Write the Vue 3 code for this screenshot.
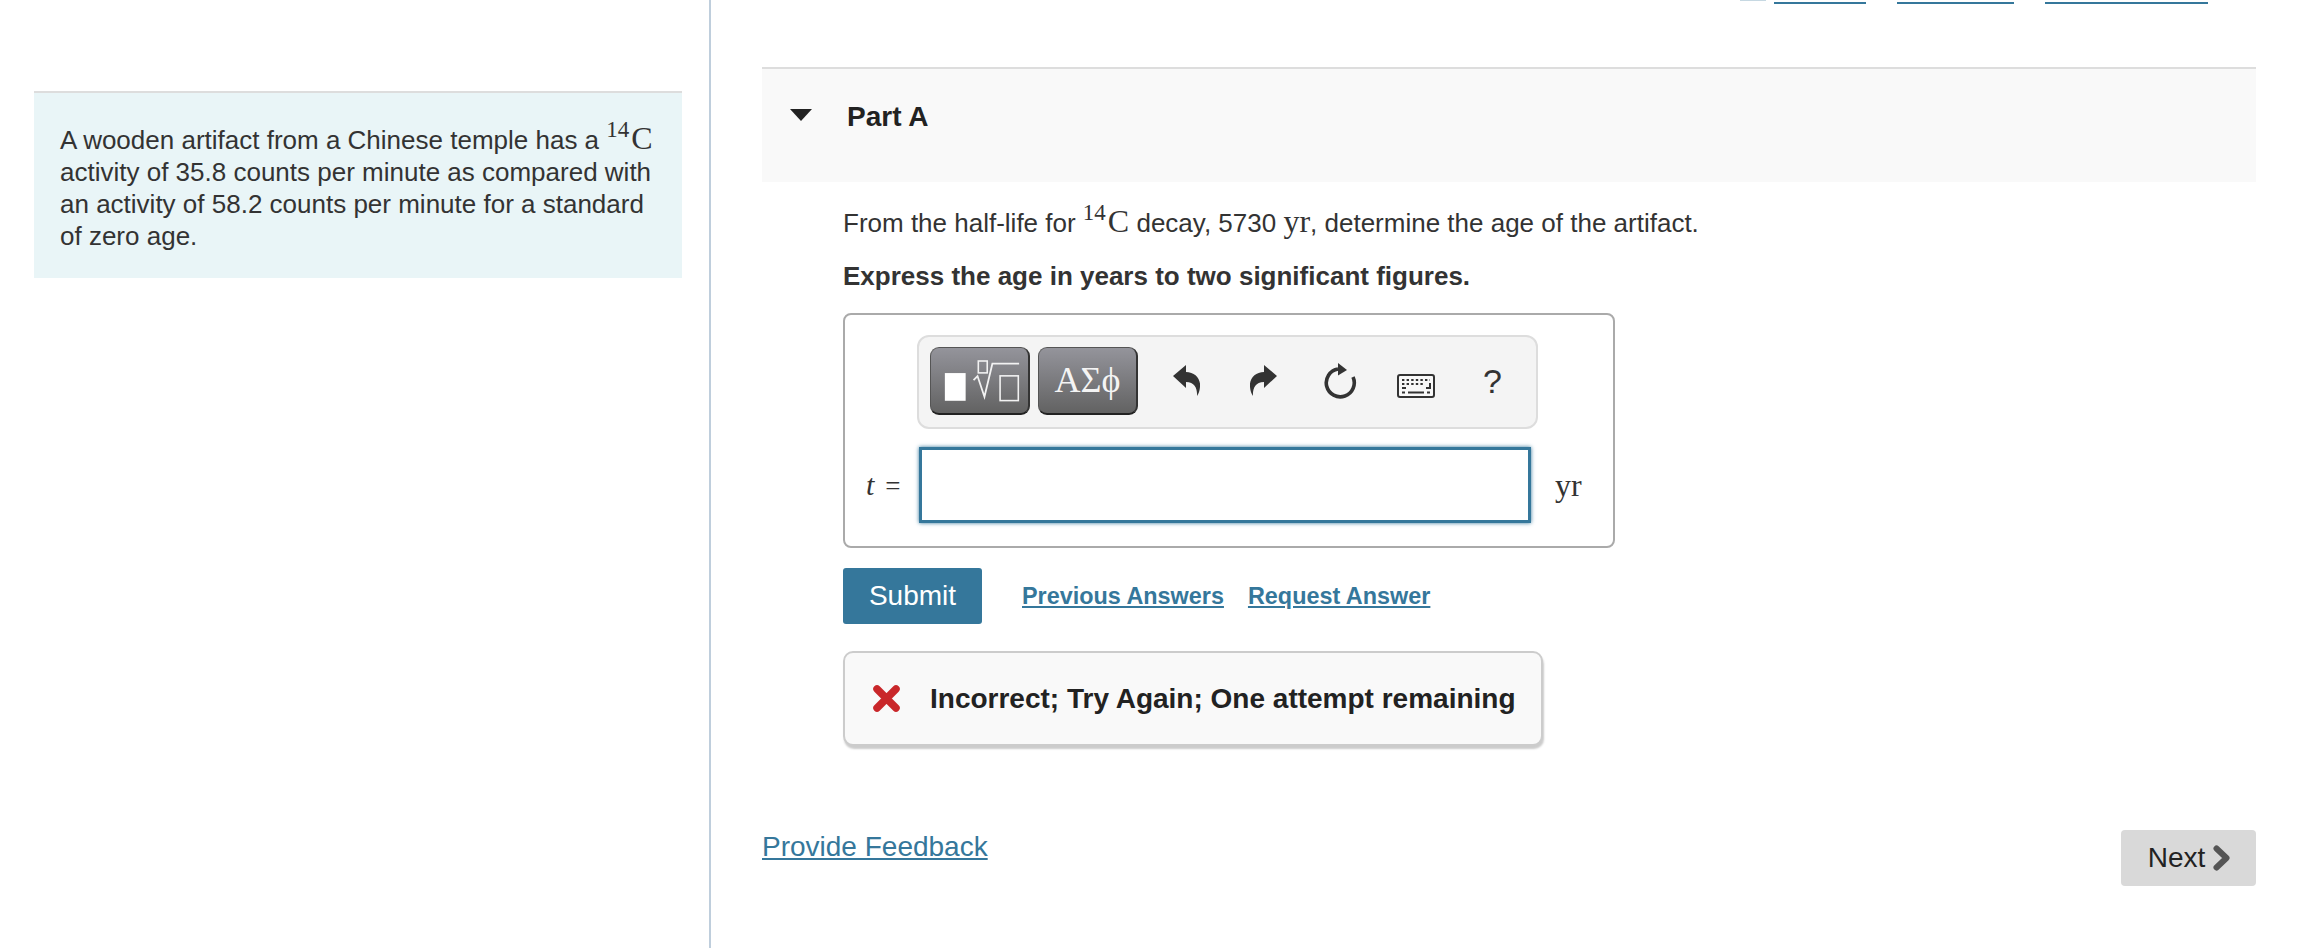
<script setup>
const topLinks = ['Review', 'Constants', 'Periodic Table']
</script>

<template>
  <div class="page">
    <aside class="left">
      <div class="intro">
        A wooden artifact from a Chinese temple has a <span class="math"><sup>14</sup>C</span>
        activity of 35.8 counts per minute as compared with an activity of 58.2 counts per minute for a standard of zero age.
      </div>
    </aside>

    <main class="right">
      <nav class="top-links">
        <span class="top-icon"></span>
        <a v-for="l in topLinks" :key="l" class="top-link">{{ l }}</a>
      </nav>

      <section class="part-head">
        <span class="caret"></span>
        <h2>Part A</h2>
      </section>

      <section class="part-body">
        <p class="question">
          From the half-life for <span class="math"><sup>14</sup>C</span> decay, 5730 <span class="math">yr</span>, determine the age of the artifact.
        </p>
        <p class="instruction">Express the age in years to two significant figures.</p>

        <div class="answer">
          <div class="toolbar">
            <button class="tool-btn">
              <svg width="98" height="65" viewBox="1 1 98 65">
                <rect x="15" y="26" width="21" height="28" fill="#fff" />
                <rect x="48.8" y="13.8" width="9" height="12" fill="none" stroke="#f2f2f2" stroke-width="1.6" />
                <path d="M44 33 L48 29 L55 50 L63 16.5 H90" fill="none" stroke="#f2f2f2" stroke-width="1.8" />
                <rect x="70.8" y="28.8" width="18.4" height="25" fill="none" stroke="#f2f2f2" stroke-width="1.6" />
              </svg>
            </button>
            <button class="tool-btn greek">ΑΣϕ</button>
            <span class="icons">
              <svg class="ic undo" width="27" height="31" viewBox="0 0 27 31"><path d="M0 11 L13 0 V7 C22 7 28 14 27 22 C26.7 26 25.5 29 24 31 C24.5 24 22 17 13 17 V23 Z" fill="#333" /></svg>
              <svg class="ic redo" width="27" height="31" viewBox="0 0 27 31"><path d="M27 11 L14 0 V7 C5 7 -1 14 0 22 C0.3 26 1.5 29 3 31 C2.5 24 5 17 14 17 V23 Z" fill="#333" /></svg>
              <svg class="ic reload" width="34" height="38" viewBox="0 0 34 38">
                <path d="M15 6 A14 14 0 1 0 30 14" fill="none" stroke="#333" stroke-width="3.6" />
                <path d="M15 0 L24 7 L15 12.5 Z" fill="#333" />
              </svg>
              <svg class="ic kbd" width="38" height="24" viewBox="0 0 38 24">
                <rect x="1" y="1" width="36" height="22" rx="2" fill="#f8f8f8" stroke="#333" stroke-width="2" />
                <path d="M5 6 H33 M5 10 H28" stroke="#333" stroke-width="2.2" stroke-dasharray="2.4 2.2" />
                <path d="M5 14 H9 M29 14 H33 V9 M5 18.5 H8 M11 18.5 H27 M30 18.5 H33" stroke="#333" stroke-width="2" fill="none" />
              </svg>
              <span class="help">?</span>
            </span>
          </div>

          <div class="answer-row">
            <span class="label"><i>t</i><span class="eq">=</span></span>
            <input class="input" type="text" />
            <span class="unit">yr</span>
          </div>
        </div>

        <div class="actions">
          <button class="submit">Submit</button>
          <a class="act-link first">Previous Answers</a>
          <a class="act-link">Request Answer</a>
        </div>

        <div class="feedback">
          <svg width="27" height="27" viewBox="0 0 27 27">
            <path d="M4 4 L23 23 M23 4 L4 23" stroke="#c9272a" stroke-width="7.5" stroke-linecap="round" />
          </svg>
          <span>Incorrect; Try Again; One attempt remaining</span>
        </div>
      </section>

      <footer class="footer">
        <a class="provide">Provide Feedback</a>
        <button class="next">
          Next
          <svg width="18" height="26" viewBox="0 0 18 26"><path d="M3.5 3.5 L13.5 13 L3.5 22.5" fill="none" stroke="#555" stroke-width="6" stroke-linecap="round" stroke-linejoin="round" /></svg>
        </button>
      </footer>
    </main>
  </div>
</template>

<style>
html, body { background: #fff; }
</style>

<style scoped>
.page {
  display: flex;
  height: 948px;
  overflow: hidden;
  font-family: "Liberation Sans", Arial, sans-serif;
  font-size: 26px;
  color: #333;
}
.left {
  box-sizing: border-box;
  width: 711px;
  flex: none;
  padding: 91px 27px 0 34px;
  border-right: 2px solid #bfcedc;
}
.intro {
  background: #e9f5f7;
  border-top: 2px solid #ddd;
  padding: 31px 20px 19px 26px;
  line-height: 32px;
  height: 187px;
  box-sizing: border-box;
}
.math {
  font-family: "Liberation Serif", "Times New Roman", serif;
  font-size: 32px;
  line-height: 0;
}
.math sup {
  font-size: 23px;
  line-height: 0;
  margin-right: 2px;
}
.right {
  flex: 1;
  padding: 0 44px 0 51px;
  min-width: 0;
}
.top-links {
  display: flex;
  justify-content: flex-end;
  align-items: flex-end;
  height: 4px;
  padding-right: 48px;
  gap: 31px;
}
.top-link {
  color: #35779b;
  font-size: 26px;
  line-height: 30px;
  border-bottom: 2px solid #35779b;
  flex: none;
  height: 30px;
}
.top-link:first-of-type {
  padding-left: 7px;
}
.top-icon {
  width: 26px;
  height: 30px;
  margin-right: -23px;
  margin-bottom: 3px;
  background: #c6d8e2;
  flex: none;
}
.part-head {
  margin-top: 63px;
  box-sizing: border-box;
  height: 115px;
  background: #f9f9f9;
  border-top: 2px solid #ddd;
  display: flex;
  align-items: flex-start;
  padding: 32px 0 0 28px;
}
.caret {
  width: 0;
  height: 0;
  border-left: 11px solid transparent;
  border-right: 11px solid transparent;
  border-top: 12px solid #222;
  margin-top: 8px;
}
.part-head h2 {
  margin: 0 0 0 35px;
  font-size: 28px;
  line-height: 32px;
  font-weight: 700;
  color: #222;
}
.part-body {
  padding-left: 81px;
}
.question {
  margin: 24px 0 0;
  line-height: 34px;
}
.instruction {
  margin: 19px 0 0;
  line-height: 34px;
  font-weight: 700;
}
.answer {
  box-sizing: border-box;
  width: 772px;
  height: 235px;
  margin-top: 20px;
  border: 2px solid #aaa;
  border-radius: 8px;
  padding: 20px 0 0 72px;
}
.toolbar {
  box-sizing: border-box;
  width: 621px;
  height: 94px;
  background: #f4f4f4;
  border: 2px solid #ddd;
  border-radius: 12px;
  display: flex;
  align-items: flex-start;
  padding: 10px 0 0 11px;
  gap: 8px;
}
.tool-btn {
  box-sizing: border-box;
  width: 100px;
  height: 68px;
  padding: 0;
  background: linear-gradient(#94949b, #626262);
  border: 1px solid #555;
  border-bottom: 2px solid #222;
  border-right: 2px solid #333;
  border-radius: 9px;
  display: flex;
  align-items: center;
  justify-content: center;
}
.greek {
  font-family: "Liberation Serif", serif;
  font-size: 36px;
  color: #f4f4f4;
  padding-bottom: 2px;
}
.icons {
  position: relative;
  flex: 1;
  height: 68px;
}
.ic {
  position: absolute;
  display: block;
}
.undo { left: 27px; top: 18px; }
.redo { left: 104px; top: 18px; }
.reload { left: 177px; top: 16px; }
.kbd { left: 251px; top: 27px; }
.help {
  position: absolute;
  left: 337px;
  top: 14px;
  font-size: 34px;
  line-height: 40px;
  color: #333;
}
.answer-row {
  display: flex;
  align-items: center;
  margin: 18px 0 0 -72px;
}
.label {
  width: 74px;
  box-sizing: border-box;
  padding-left: 21px;
  font-family: "Liberation Serif", serif;
  font-size: 30px;
  white-space: nowrap;
}
.eq {
  margin-left: 11px;
  font-size: 27px;
}
.input {
  box-sizing: border-box;
  width: 612px;
  height: 76px;
  flex: none;
  border: 3px solid #35779b;
  box-shadow: 0 0 4px #35779b;
  outline: none;
  background: #fff;
  padding: 0;
}
.unit {
  margin-left: 24px;
  font-family: "Liberation Serif", serif;
  font-size: 32px;
}
.actions {
  display: flex;
  align-items: center;
  margin-top: 20px;
}
.submit {
  width: 139px;
  height: 56px;
  background: #35779b;
  color: #fff;
  border: none;
  border-radius: 3px;
  font-family: inherit;
  font-size: 28px;
  padding: 0;
}
.act-link {
  font-size: 23.4px;
  font-weight: 700;
  color: #35779b;
  text-decoration: underline;
  margin-left: 24px;
}
.act-link.first { margin-left: 40px; }
.feedback {
  box-sizing: border-box;
  width: 700px;
  height: 95px;
  margin-top: 27px;
  background: #f9f9f9;
  border: 2px solid #ccc;
  border-radius: 10px;
  box-shadow: 1px 3px 2px #ccc;
  display: flex;
  align-items: center;
  padding: 0 0 0 28px;
  gap: 30px;
  font-weight: 700;
  font-size: 28px;
  color: #222;
}
.feedback span { white-space: nowrap; }
.footer {
  display: flex;
  justify-content: space-between;
  align-items: flex-start;
  margin-top: 84px;
}
.provide {
  font-size: 28px;
  line-height: 34px;
  color: #35779b;
  text-decoration: underline;
}
.next {
  width: 135px;
  height: 56px;
  background: #d9d9d9;
  border: none;
  border-radius: 4px;
  font-family: inherit;
  font-size: 28px;
  color: #222;
  display: flex;
  align-items: center;
  justify-content: center;
  gap: 8px;
  padding: 0 0 0 2px;
}
</style>
